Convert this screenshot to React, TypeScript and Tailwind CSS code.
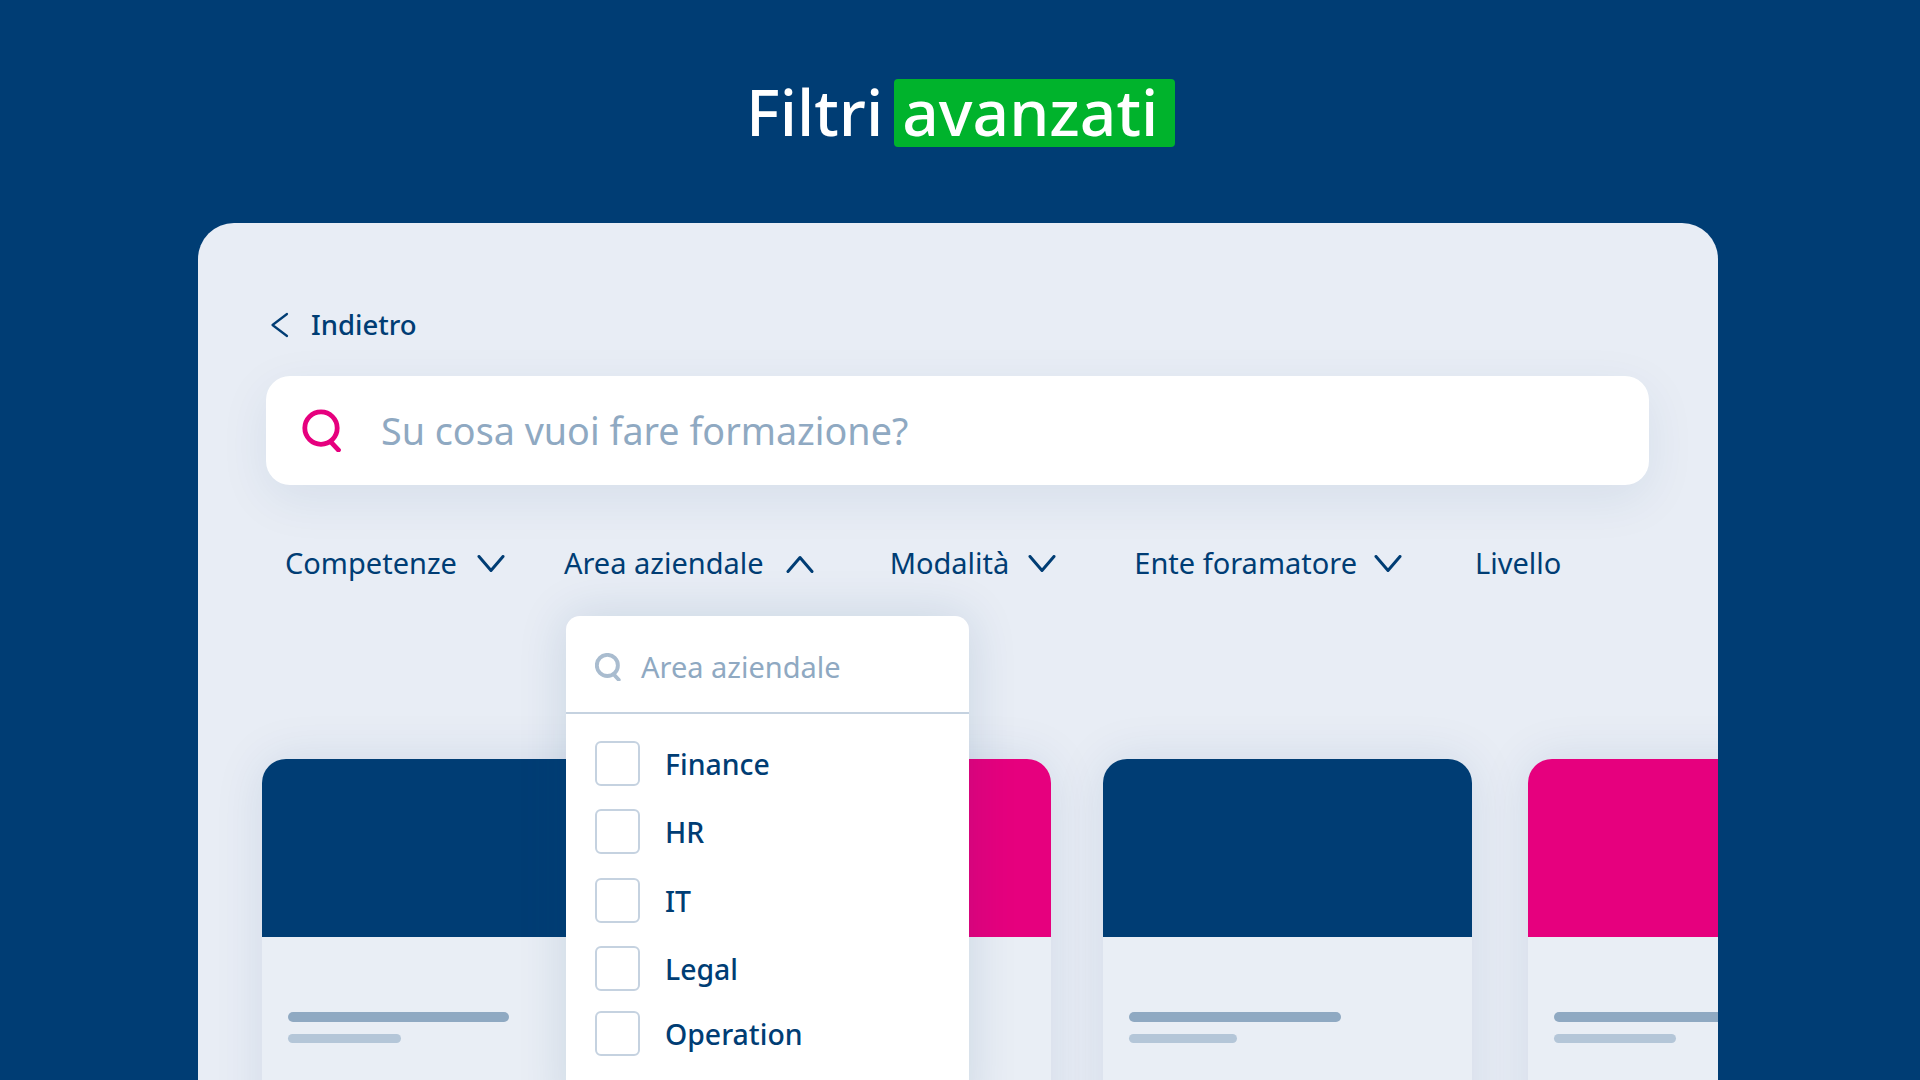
const FONT = "font-['Noto_Sans',sans-serif]";

function Chevron({ up = false, className = "" }: { up?: boolean; className?: string }) {
  return (
    <svg width="28" height="18" viewBox="0 0 28 18" fill="none" className={className}>
      <path
        d={up ? "M2 16.5 L14 2.5 L26 16.5" : "M2 1.5 L14 15.5 L26 1.5"}
        stroke="#003d74"
        strokeWidth="3"
        strokeLinecap="round"
        strokeLinejoin="round"
      />
    </svg>
  );
}

function SearchIcon({ color, size, stroke }: { color: string; size: number; stroke: number }) {
  return (
    <svg width={size} height={size * 1.08} viewBox="0 0 40 43" fill="none">
      <circle cx="19" cy="19" r="16.2" stroke={color} strokeWidth={stroke} />
      <path d="M29 33 L36.5 41" stroke={color} strokeWidth={stroke} strokeLinecap="round" />
    </svg>
  );
}

function Filter({ label, up, ml, gap, noIcon }: { label: string; up?: boolean; ml: string; gap: string; noIcon?: boolean }) {
  return (
    <div className={`flex items-center ${ml} ${gap}`}>
      <span className="-translate-y-[1px]">{label}</span>
      {!noIcon && <Chevron up={up} />}
    </div>
  );
}

function Card({ color, bar, sub, cls }: { color: string; bar: string; sub: string; cls: string }) {
  return (
    <div className={`shrink-0 h-[400px] rounded-t-[24px] bg-[#e9eef5] shadow-[0_0_50px_rgba(0,61,116,0.10)] ${cls}`}>
      <div className={`h-[178px] rounded-t-[24px] ${color}`} />
      <div className="pl-[26px] pt-[75px]">
        <div className={`h-[10px] rounded-full bg-[#8fa9c2] ${bar}`} />
        <div className={`h-[9px] mt-[12px] rounded-full bg-[#b4c6d8] ${sub}`} />
      </div>
    </div>
  );
}

const OPTIONS: [string, string][] = [
  ["Finance", "mt-[27px]"],
  ["HR", "mt-[23px]"],
  ["IT", "mt-[24px]"],
  ["Legal", "mt-[23px]"],
  ["Operation", "mt-[20px]"],
];

export default function App() {
  return (
    <div className={`h-[1080px] w-[1920px] overflow-hidden bg-[#003d74] flex flex-col ${FONT}`}>
      <div className="pt-[79px] pl-[746px] flex items-center h-[147px] text-white text-[64px] font-medium leading-none">
        <span className="-translate-y-[1px]">Filtri</span>
        <span className="ml-[11px] h-[68px] w-[281px] pl-[8px] rounded-[4px] bg-[#00b32c] flex items-center">
          <span className="-translate-y-[1px]">avanzati</span>
        </span>
      </div>

      <div className="relative mt-[76px] ml-[198px] w-[1520px] flex-1 overflow-hidden rounded-t-[36px] bg-[#e8edf5] pl-[64px] text-[#003d74] text-[29px]">
        <div className="mt-[82px] h-10 ml-[8px] flex items-center gap-[22px] text-[27.5px] font-medium">
          <svg width="19" height="26" viewBox="0 0 19 26" fill="none">
            <path d="M17 2 L2.5 13 L17 24" stroke="#003d74" strokeWidth="2.2" strokeLinecap="round" strokeLinejoin="round" />
          </svg>
          <span>Indietro</span>
        </div>

        <div className="mt-[31px] ml-[4px] h-[109px] w-[1383px] rounded-[24px] bg-white shadow-[0_14px_50px_rgba(0,61,116,0.08)] flex items-center pl-[36px]">
          <SearchIcon color="#e6007e" size={40} stroke={4.8} />
          <span className="ml-[39px] text-[37.7px] text-[#8fa9c2] translate-y-[1px]">Su cosa vuoi fare formazione?</span>
        </div>

        <div className="mt-[59px] h-10 pl-[23px] flex items-center">
          <Filter label="Competenze" ml="" gap="gap-[20px]" />
          <Filter label="Area aziendale" up ml="ml-[59px]" gap="gap-[22px]" />
          <Filter label="Modalità" ml="ml-[76px]" gap="gap-[19px]" />
          <Filter label="Ente foramatore" ml="ml-[78px]" gap="gap-[17px]" />
          <Filter label="Livello" ml="ml-[73px]" gap="" noIcon />
        </div>

        <div className="mt-[175px] flex">
          <Card color="bg-[#003d74]" bar="w-[221px]" sub="w-[113px]" cls="w-[369px]" />
          <Card color="bg-[#e6007e]" bar="w-[221px]" sub="w-[113px]" cls="w-[369px] ml-[51px]" />
          <Card color="bg-[#003d74]" bar="w-[212px]" sub="w-[108px]" cls="w-[369px] ml-[52px]" />
          <Card color="bg-[#e6007e]" bar="w-[212px]" sub="w-[122px]" cls="w-[369px] ml-[56px]" />
        </div>

        <div className="absolute left-[368px] top-[393px] w-[403px] h-[500px] rounded-t-[14px] bg-white shadow-[0_0_50px_rgba(0,61,116,0.14)]">
          <div className="h-[98px] border-b-2 border-[#c5d2e0] flex items-center pl-[29px] pt-[6px]">
            <SearchIcon color="#a9bccf" size={26} stroke={6} />
            <span className="ml-[20px] text-[29px] text-[#8fa9c2]">Area aziendale</span>
          </div>
          {OPTIONS.map(([name, mt]) => (
            <div key={name} className={`flex items-center pl-[29px] ${mt}`}>
              <div className="w-[45px] h-[45px] rounded-[6px] border-2 border-[#c5d2e0]" />
              <span className="ml-[25px] text-[28.4px] font-medium translate-y-[1px]">{name}</span>
            </div>
          ))}
        </div>
      </div>
    </div>
  );
}
